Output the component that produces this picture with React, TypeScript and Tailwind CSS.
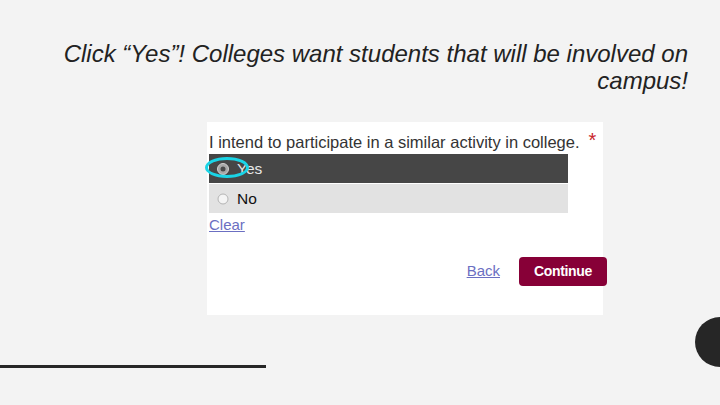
import React from 'react';

// Radio dot drawn by hand so the greyed "checked" look of the screenshot is kept
const RadioDot: React.FC<{ checked: boolean }> = ({ checked }) => (
  <svg width="12" height="12" viewBox="0 0 12 12" className="flex-shrink-0">
    {checked ? (
      <>
        <circle cx="6" cy="6" r="5.5" fill="#a8a8a8" stroke="#d0d0d0" strokeWidth="1" />
        <circle cx="6" cy="6" r="2.5" fill="#4a4a4a" />
      </>
    ) : (
      <circle cx="6" cy="6" r="5" fill="#f4f4f4" stroke="#b4b4b4" strokeWidth="1" />
    )}
  </svg>
);

const OPTIONS = [
  { id: 'yes', label: 'Yes', checked: true },
  { id: 'no', label: 'No', checked: false },
];

export default function App() {
  return (
    <div
      className="relative w-[720px] h-[405px] overflow-hidden bg-[#f3f3f3]"
      style={{ fontFamily: '"Liberation Sans", Arial, sans-serif' }}
    >
      {/* Título */}
      <div className="pt-[40px] pr-[32px] flex justify-end">
        <p className="w-[640px] text-right italic text-[24px] leading-[27px] text-[#222]">
          Click “Yes”! Colleges want students that will be involved on campus!
        </p>
      </div>

      {/* Cartão do formulário */}
      <div className="ml-[207px] mt-[28px] w-[396px] bg-white pl-[2px] pt-[11px] pb-[29px]">
        <div className="flex items-start text-[16.5px] leading-[18px] text-[#333]">
          <span>I intend to participate in a similar activity in college.</span>
          <span className="ml-[9px] -mt-[3px] text-[20px] leading-[20px] text-[#c9262c]">*</span>
        </div>

        <div className="mt-[3px] w-[359px] flex flex-col gap-px">
          {OPTIONS.map((opt) => (
            <div
              key={opt.id}
              className={`relative h-[29px] flex items-center pl-[8px] gap-[8px] text-[15.5px] ${
                opt.checked ? 'bg-[#464646] text-[#e8e8e8]' : 'bg-[#e2e2e2] text-[#111]'
              }`}
            >
              <RadioDot checked={opt.checked} />
              <span>{opt.label}</span>
              {opt.checked && (
                <span className="absolute left-[-4px] top-[3px] w-[44px] h-[21px] rounded-[50%] border-[3px] border-[#1ad4e6]" />
              )}
            </div>
          ))}
        </div>

        <a className="block mt-[3px] text-[15px] leading-[18px] text-[#6b6fc2] underline">Clear</a>

        <div className="mt-[23px] flex items-center justify-end -mr-[4px]">
          <a className="text-[15px] text-[#6b6fc2] underline mr-[19px]">Back</a>
          <button className="w-[88px] h-[29px] rounded-[4px] bg-[#870037] text-white text-[14px] font-bold tracking-tight">
            Continue
          </button>
        </div>
      </div>

      {/* Linha decorativa */}
      <div className="mt-[50px] w-[266px] h-[3px] bg-[#262626]" />

      {/* Círculo decorativo no canto */}
      <div className="absolute right-[-25px] top-[317px] w-[50px] h-[50px] rounded-full bg-[#262626]" />
    </div>
  );
}
